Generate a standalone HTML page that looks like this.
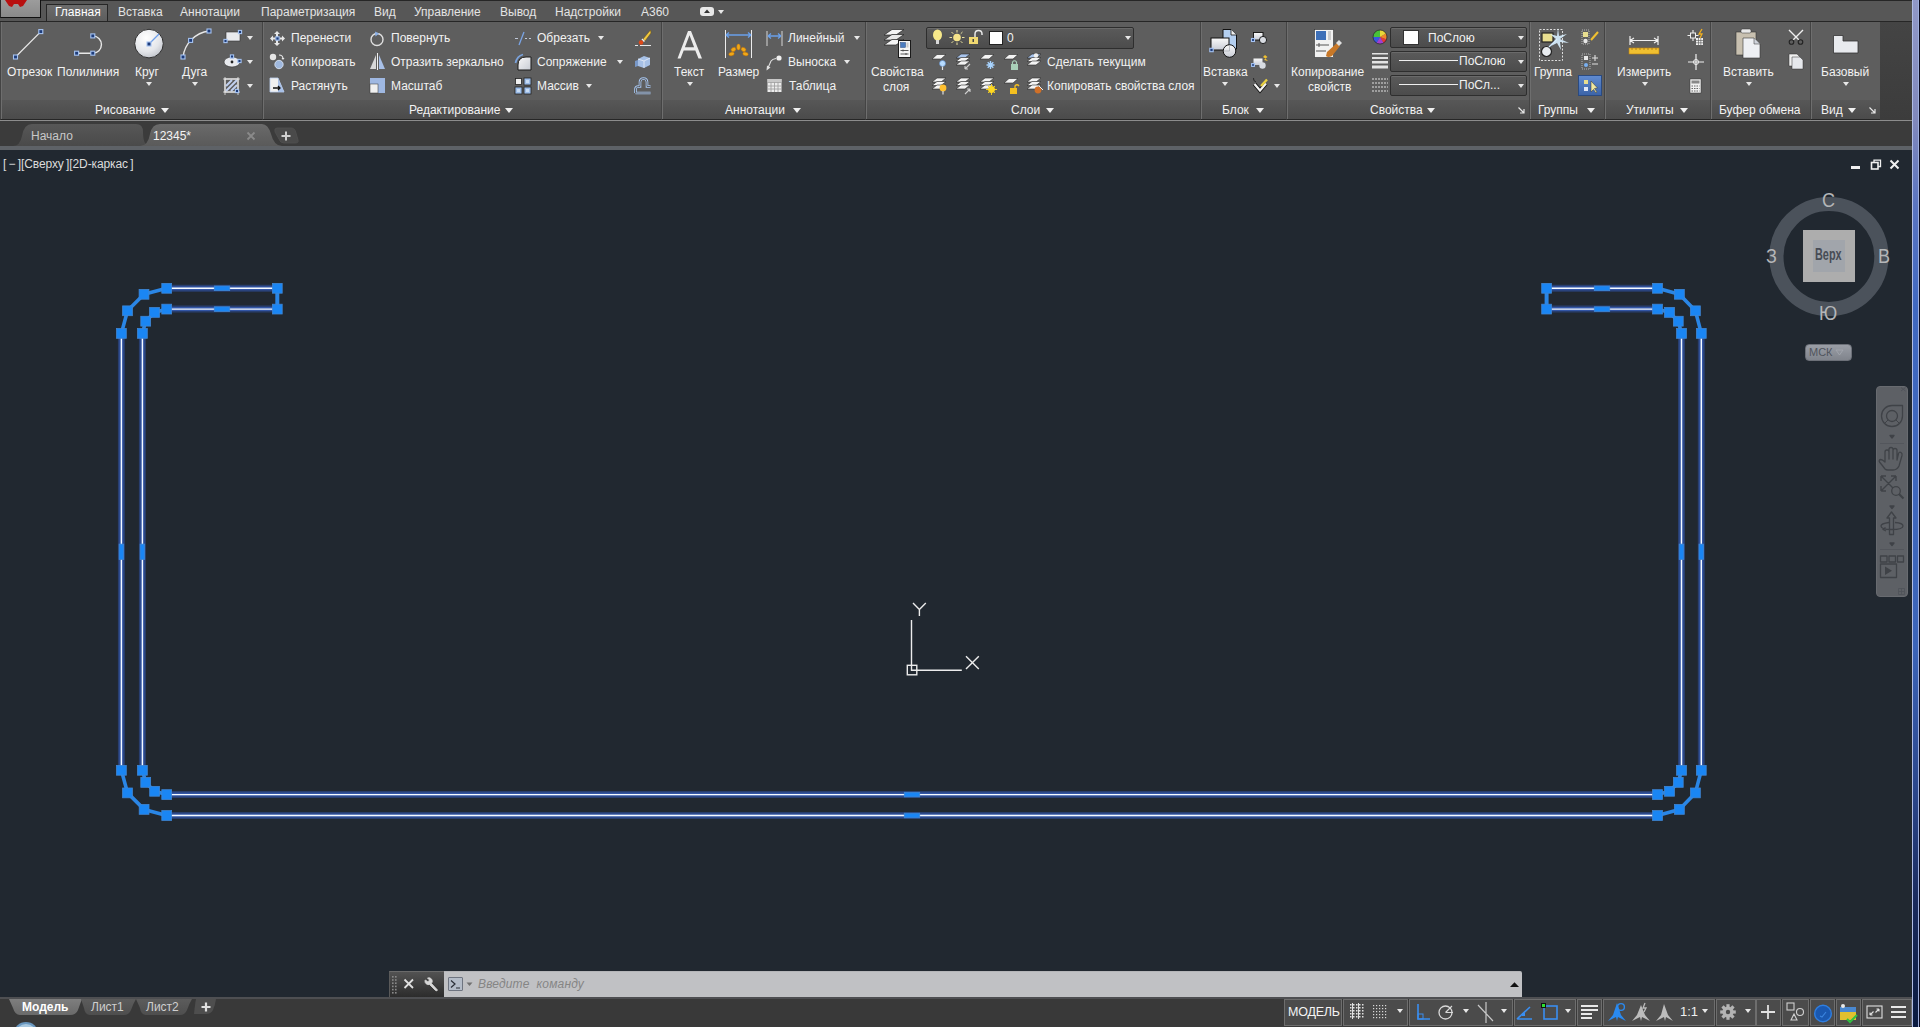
<!DOCTYPE html>
<html><head><meta charset="utf-8"><title>AutoCAD</title>
<style>
*{margin:0;padding:0;box-sizing:border-box}
html,body{width:1920px;height:1027px;overflow:hidden;background:#212830;font-family:"Liberation Sans",sans-serif;font-size:12px;color:#f0f0f0}
.a{position:absolute}
.t{position:absolute;white-space:nowrap;line-height:14px;color:#f2f2f2}
svg{position:absolute;overflow:visible}
#topbar{left:0;top:0;width:1913px;height:22px;background:#575757;border-top:1px solid #262626;border-bottom:1px solid #262626}
#ribbon{left:0;top:21px;width:1913px;height:100px;background:linear-gradient(#444,#3c3c3c);border-top:1px solid #262626;border-bottom:1px solid #8c8c8c}
.panel{position:absolute;top:0;height:98px;background:#5e5e5e;border-left:1px solid #444;border-bottom:1px solid #262626}
.panel:after{content:"";position:absolute;left:0;top:0;bottom:0;width:1px;background:#6e6e6e}
.ptitle{position:absolute;left:0;right:0;bottom:0;height:19px;background:linear-gradient(#575757,#4b4b4b)}
.arr{position:absolute;width:0;height:0;border-left:4px solid transparent;border-right:4px solid transparent;border-top:5px solid #f0f0f0}
.sarr{position:absolute;width:0;height:0;border-left:3px solid transparent;border-right:3px solid transparent;border-top:4px solid #e8e8e8}
.dd{position:absolute;background:linear-gradient(#5a5a5a,#4c4c4c);border:1px solid #2e2e2e;border-radius:2px;box-shadow:inset 0 1px 0 #6a6a6a}
#doctabs{left:0;top:121px;width:1913px;height:29px;background:#3b3b3b}
#canvas{left:0;top:150px;width:1913px;height:848px;background:#212830}
#status{left:0;top:997px;width:1913px;height:30px;background:#393939;border-top:2px solid #4e4f52}
#rborder{left:1912px;top:0;width:8px;height:1027px;background:linear-gradient(#9098c8,#8088bc 12%,#5a74c0 20%,#4068c0 30%,#3c64b8 63%,#2a4488 78%,#1a2a5c 88%,#0a1a40);border-left:1px solid #b0bce4;border-right:1px solid #0a0a20;box-shadow:inset -1px 0 0 #a0b0dc}
.sg{position:absolute;top:2px;height:26px;background:#4b4b4b;border:1px solid #6e6e6e}
</style></head>
<body>
<div id="canvas" class="a"></div>
<div id="topbar" class="a"></div>
<div class="a" style="left:0;top:0;width:41px;height:18px;background:linear-gradient(#9c9c9c,#8a8a8a);border:1px solid #111;border-top:none;border-left:1px solid #2a2a2a"></div>
<svg style="left:4px;top:0px" width="24" height="8" viewBox="0 0 24 8"><path d="M1 0 L5 6 L8 7 L10 4 L14 4 L16 7 L19 6 L23 0 Z" fill="#b81010"/></svg>
<div class="a" style="left:46px;top:4px;width:62px;height:18px;background:linear-gradient(#6c6c6c,#5c5c5c);border:1px solid #262626;border-bottom:none"></div>
<span class="t" style="left:55px;top:5px;color:#ffffff">Главная</span>
<span class="t" style="left:118px;top:5px;color:#e4e4e4">Вставка</span>
<span class="t" style="left:180px;top:5px;color:#e4e4e4">Аннотации</span>
<span class="t" style="left:261px;top:5px;color:#e4e4e4">Параметризация</span>
<span class="t" style="left:374px;top:5px;color:#e4e4e4">Вид</span>
<span class="t" style="left:414px;top:5px;color:#e4e4e4">Управление</span>
<span class="t" style="left:500px;top:5px;color:#e4e4e4">Вывод</span>
<span class="t" style="left:555px;top:5px;color:#e4e4e4">Надстройки</span>
<span class="t" style="left:641px;top:5px;color:#e4e4e4">A360</span>
<div class="a" style="left:700px;top:7px;width:14px;height:9px;background:#e8e8e8;border-radius:3px"></div>
<svg style="left:703px;top:8px" width="8" height="6" viewBox="0 0 8 6"><path d="M1 5 L4 1.5 L7 5Z" fill="#333"/></svg>
<div class="sarr" style="left:718px;top:10px"></div>
<div id="ribbon" class="a">










</div>
<div class="panel" style="left:0px;top:22px;width:262px"><div class="ptitle"></div></div>
<span class="t" style="left:95px;top:103px;">Рисование</span>
<div class="arr" style="left:160.5px;top:108px"></div>
<div class="panel" style="left:262px;top:22px;width:399px"><div class="ptitle"></div></div>
<span class="t" style="left:409px;top:103px;">Редактирование</span>
<div class="arr" style="left:505px;top:108px"></div>
<div class="panel" style="left:661px;top:22px;width:204px"><div class="ptitle"></div></div>
<span class="t" style="left:725px;top:103px;">Аннотации</span>
<div class="arr" style="left:793px;top:108px"></div>
<div class="panel" style="left:865px;top:22px;width:335px"><div class="ptitle"></div></div>
<span class="t" style="left:1011px;top:103px;">Слои</span>
<div class="arr" style="left:1046px;top:108px"></div>
<div class="panel" style="left:1200px;top:22px;width:86px"><div class="ptitle"></div></div>
<span class="t" style="left:1222px;top:103px;">Блок</span>
<div class="arr" style="left:1256px;top:108px"></div>
<div class="panel" style="left:1286px;top:22px;width:243px"><div class="ptitle"></div></div>
<span class="t" style="left:1370px;top:103px;">Свойства</span>
<div class="arr" style="left:1427px;top:108px"></div>
<svg style="left:1517px;top:106px" width="9" height="9" viewBox="0 0 9 9"><path d="M1.5 1.5 L7 7 M7 3 L7 7 L3 7" stroke="#e8e8e8" stroke-width="1.2" fill="none"/></svg>
<div class="panel" style="left:1529px;top:22px;width:75px"><div class="ptitle"></div></div>
<span class="t" style="left:1538px;top:103px;">Группы</span>
<div class="arr" style="left:1587px;top:108px"></div>
<div class="panel" style="left:1604px;top:22px;width:106px"><div class="ptitle"></div></div>
<span class="t" style="left:1626px;top:103px;">Утилиты</span>
<div class="arr" style="left:1680px;top:108px"></div>
<div class="panel" style="left:1710px;top:22px;width:100px"><div class="ptitle"></div></div>
<span class="t" style="left:1719px;top:103px;">Буфер обмена</span>
<div class="panel" style="left:1810px;top:22px;width:70px"><div class="ptitle"></div></div>
<span class="t" style="left:1821px;top:103px;">Вид</span>
<div class="arr" style="left:1848px;top:108px"></div>
<svg style="left:1868px;top:106px" width="9" height="9" viewBox="0 0 9 9"><path d="M1.5 1.5 L7 7 M7 3 L7 7 L3 7" stroke="#e8e8e8" stroke-width="1.2" fill="none"/></svg>
<svg style="left:0px;top:22px" width="60" height="50" viewBox="0 0 60 50"><line x1="15.5" y1="35" x2="40.8" y2="9.6" stroke="#e8e8e8" stroke-width="1.3"/><rect x="13.5" y="33.0" width="4" height="4" fill="#1e3c7a" stroke="#a6c4f2" stroke-width="1.1"/><rect x="38.8" y="7.6" width="4" height="4" fill="#1e3c7a" stroke="#a6c4f2" stroke-width="1.1"/></svg>
<span class="t" style="left:7px;top:65px;">Отрезок</span>
<svg style="left:60px;top:22px" width="60" height="50" viewBox="0 0 60 50"><path d="M16.6 31.2 L32.8 31.2 A8.6 8.6 0 0 0 32.8 13.9" stroke="#e8e8e8" stroke-width="1.4" fill="none"/><rect x="14.600000000000001" y="29.2" width="4" height="4" fill="#1e3c7a" stroke="#a6c4f2" stroke-width="1.1"/><rect x="30.799999999999997" y="29.2" width="4" height="4" fill="#1e3c7a" stroke="#a6c4f2" stroke-width="1.1"/><rect x="30.799999999999997" y="11.9" width="4" height="4" fill="#1e3c7a" stroke="#a6c4f2" stroke-width="1.1"/></svg>
<span class="t" style="left:57px;top:65px;">Полилиния</span>
<svg style="left:120px;top:22px" width="60" height="50" viewBox="0 0 60 50"><defs><radialGradient id="cg" cx="0.4" cy="0.3" r="0.8"><stop offset="0" stop-color="#ffffff"/><stop offset="0.6" stop-color="#e4e6ea"/><stop offset="1" stop-color="#b8bcc4"/></radialGradient></defs><circle cx="29" cy="21.6" r="14.3" fill="url(#cg)" stroke="#2e2e2e" stroke-width="1"/><line x1="29" y1="22" x2="39" y2="12" stroke="#6a9ce8" stroke-width="1.2"/><rect x="27.0" y="20.0" width="4" height="4" fill="#1e3c7a" stroke="#a6c4f2" stroke-width="1.1"/></svg>
<span class="t" style="left:135px;top:65px;">Круг</span>
<div class="sarr" style="left:145.5px;top:82px"></div>
<svg style="left:180px;top:22px" width="40" height="50" viewBox="0 0 40 50"><path d="M3 35 A30 30 0 0 1 29 9" stroke="#e8e8e8" stroke-width="1.3" fill="none"/><rect x="1.0" y="33.0" width="4" height="4" fill="#1e3c7a" stroke="#a6c4f2" stroke-width="1.1"/><rect x="8.6" y="16.4" width="4" height="4" fill="#1e3c7a" stroke="#a6c4f2" stroke-width="1.1"/><rect x="27.0" y="7.0" width="4" height="4" fill="#1e3c7a" stroke="#a6c4f2" stroke-width="1.1"/></svg>
<span class="t" style="left:182px;top:65px;">Дуга</span>
<div class="sarr" style="left:192.3px;top:82px"></div>
<svg style="left:222px;top:28px" width="22" height="18" viewBox="0 0 22 18"><rect x="4" y="4" width="14" height="9" fill="#e8eaee" stroke="#333" stroke-width="0.6"/><rect x="1.9" y="11.4" width="3.2" height="3.2" fill="#1e3c7a" stroke="#a6c4f2" stroke-width="1.1"/><rect x="16.4" y="2.4" width="3.2" height="3.2" fill="#1e3c7a" stroke="#a6c4f2" stroke-width="1.1"/></svg>
<svg style="left:222px;top:53px" width="22" height="18" viewBox="0 0 22 18"><ellipse cx="10" cy="9" rx="8" ry="5" fill="#e8eaee" stroke="#333" stroke-width="0.6"/><circle cx="10" cy="9" r="1.4" fill="#222"/><rect x="8.4" y="1.9" width="3.2" height="3.2" fill="#1e3c7a" stroke="#a6c4f2" stroke-width="1.1"/><rect x="15.9" y="6.4" width="3.2" height="3.2" fill="#1e3c7a" stroke="#a6c4f2" stroke-width="1.1"/></svg>
<svg style="left:222px;top:76px" width="22" height="20" viewBox="0 0 22 20"><rect x="3" y="3" width="13" height="13" fill="none" stroke="#e8e8e8" stroke-width="1.2"/><path d="M4 15 L15 4 M4 10 L10 4 M9 15 L15 9" stroke="#c0d0f0" stroke-width="2"/><path d="M1 3H18 M1 16H18 M3 1V19 M16 1V19" stroke="#e8e8e8" stroke-width="0.8"/><rect x="13.4" y="13.4" width="3.2" height="3.2" fill="#1e3c7a" stroke="#a6c4f2" stroke-width="1.1"/></svg>
<div class="sarr" style="left:246.6px;top:36px"></div>
<div class="sarr" style="left:246.6px;top:60px"></div>
<div class="sarr" style="left:246.6px;top:84px"></div>
<svg style="left:269px;top:30px" width="18" height="18" viewBox="0 0 18 18"><path d="M8 1 L11 4 H9 V7 H7 V4 H5Z M8 16 L11 13 H9 V10 H7 V13 H5Z M1 8.5 L4 5.5 V7.5 H6.5 V9.5 H4 V11.5Z M16 8.5 L13 5.5 V7.5 H10.5 V9.5 H13 V11.5Z" fill="#e8e8e8"/><rect x="6.8" y="6.8" width="3.4" height="3.4" fill="#1e3c7a" stroke="#a6c4f2" stroke-width="1.1"/></svg>
<span class="t" style="left:291px;top:31px;">Перенести</span>
<svg style="left:269px;top:53px" width="18" height="18" viewBox="0 0 18 18"><circle cx="4" cy="4" r="3.2" fill="#e6e6e6"/><circle cx="10" cy="11.5" r="4.2" fill="#9fb8de" stroke="#dfe8f6" stroke-width="0.8"/><path d="M10 2 Q14 2 14 6" stroke="#e8e8e8" fill="none" stroke-width="1.1"/><path d="M12.5 5 L14 7 L15.5 5Z" fill="#e8e8e8"/></svg>
<span class="t" style="left:291px;top:55px;">Копировать</span>
<svg style="left:269px;top:77px" width="18" height="18" viewBox="0 0 18 18"><path d="M1 1 H9 L15 15 H1Z" fill="#f0f0f0" stroke="#bcd0f0" stroke-width="0.8"/><path d="M9 1 L15 15 H9Z" fill="#a8c0e8"/><path d="M4 11 H11 M9 9 L11 11 L9 13" stroke="#111" stroke-width="1.3" fill="none"/></svg>
<span class="t" style="left:291px;top:79px;">Растянуть</span>
<svg style="left:369px;top:30px" width="18" height="18" viewBox="0 0 18 18"><circle cx="8" cy="9.5" r="6" fill="none" stroke="#e0e0e0" stroke-width="1.4"/><path d="M6 1.5 L10 3.5 L6.5 6.5Z" fill="#8ab0e8"/></svg>
<span class="t" style="left:391px;top:31px;">Повернуть</span>
<svg style="left:369px;top:53px" width="18" height="18" viewBox="0 0 18 18"><path d="M7 2 V16 H1Z" fill="#d8d8d8"/><path d="M10 2 V16 H16Z" fill="#a8c0e8"/><line x1="8.5" y1="0" x2="8.5" y2="17" stroke="#f0f0f0" stroke-width="1"/></svg>
<span class="t" style="left:391px;top:55px;">Отразить зеркально</span>
<svg style="left:369px;top:77px" width="18" height="18" viewBox="0 0 18 18"><rect x="1" y="1" width="15" height="15" fill="#9fb8e2"/><rect x="1" y="7" width="8" height="9" fill="#f0f0f0" stroke="#333" stroke-width="0.5"/></svg>
<span class="t" style="left:391px;top:79px;">Масштаб</span>
<svg style="left:514px;top:30px" width="18" height="18" viewBox="0 0 18 18"><path d="M1 8.5 H4 M11 8.5 H13 M15 8.5 H17" stroke="#c0c8d8" stroke-width="1.1"/><line x1="5" y1="15" x2="10" y2="2" stroke="#7aa4e4" stroke-width="1.3"/></svg>
<span class="t" style="left:537px;top:31px;">Обрезать</span>
<div class="sarr" style="left:597.6px;top:36px"></div>
<svg style="left:514px;top:53px" width="18" height="18" viewBox="0 0 18 18"><defs><linearGradient id="fg" x1="0" y1="0" x2="1" y2="1"><stop offset="0" stop-color="#f8f8f8"/><stop offset="1" stop-color="#c8ccd4"/></linearGradient></defs><path d="M4 17 V12 Q4 4 12 4 H17 V17Z" fill="url(#fg)" stroke="#1a1a1a" stroke-width="1"/><path d="M1.5 10 Q3 3 9 1.5" stroke="#7aa2dc" stroke-width="1.8" fill="none"/></svg>
<span class="t" style="left:537px;top:55px;">Сопряжение</span>
<div class="sarr" style="left:616.5px;top:60px"></div>
<svg style="left:514px;top:77px" width="18" height="18" viewBox="0 0 18 18"><g stroke="#222" stroke-width="0.8"><rect x="1.5" y="1.5" width="6" height="6" fill="#f0f0f0"/><rect x="10" y="1" width="7" height="7" fill="#9cbce8"/><rect x="1" y="10" width="7" height="7" fill="#9cbce8"/><rect x="10" y="10" width="7" height="7" fill="#9cbce8"/></g><g fill="#c8dcf4"><rect x="12" y="3" width="3" height="3"/><rect x="3" y="12" width="3" height="3"/><rect x="12" y="12" width="3" height="3"/></g></svg>
<span class="t" style="left:537px;top:79px;">Массив</span>
<div class="sarr" style="left:585.6px;top:84px"></div>
<svg style="left:634px;top:29px" width="18" height="18" viewBox="0 0 18 18"><path d="M16.5 1 L9 10 L11 12 L17 4Z" fill="#f0c840" stroke="#6a5010" stroke-width="0.5"/><path d="M8 10 L10.5 12.5" stroke="#f0f0f0" stroke-width="1.5"/><circle cx="7" cy="13.5" r="2.3" fill="#e04818"/><path d="M1 16.5 H4 M6 16.5 H17" stroke="#e8e8e8" stroke-width="1"/></svg>
<svg style="left:634px;top:53px" width="18" height="18" viewBox="0 0 18 18"><path d="M4 6 L10 3 L16 5 V12 L10 15 L4 13Z" fill="#a6c0e6"/><path d="M4 6 L10 8 L16 5 M10 8 V15" stroke="#e8eef8" stroke-width="0.8" fill="none"/><path d="M1 8 L4 7 V13 L1 14Z" fill="#7898c8"/></svg>
<svg style="left:634px;top:77px" width="18" height="18" viewBox="0 0 18 18"><path d="M1.5 16 V12 Q1.5 9.5 4.5 9.5 H6 V5 Q6 1.5 9.5 1.5 Q13 1.5 13 5 V9.5 H16.5 M1.5 16 H16.5" fill="none" stroke="#a8c8f4" stroke-width="2.6"/><path d="M1.5 16 V12 Q1.5 9.5 4.5 9.5 H6 V5 Q6 1.5 9.5 1.5 Q13 1.5 13 5 V9.5 H16.5 M1.5 16 H16.5" fill="none" stroke="#5e5e5e" stroke-width="1"/></svg>
<svg style="left:676px;top:29px" width="30" height="32" viewBox="0 0 30 32"><path d="M1.5 29.5 L12 2 H15 L26 29.5 H22.5 L19.3 21.5 H7.7 L4.6 29.5Z M8.9 18.3 H18.1 L13.5 6.3Z" fill="#ececec"/></svg>
<span class="t" style="left:674px;top:65px;">Текст</span>
<div class="sarr" style="left:687px;top:82px"></div>
<svg style="left:723px;top:28px" width="32" height="32" viewBox="0 0 32 32"><line x1="2.5" y1="2" x2="2.5" y2="30" stroke="#ececec" stroke-width="1"/><line x1="28.5" y1="2" x2="28.5" y2="30" stroke="#ececec" stroke-width="1"/><path d="M3 7 H28 M3 7 L6 4.5 M3 7 L6 9.5 M28 7 L25 4.5 M28 7 L25 9.5" stroke="#6aa0ea" stroke-width="1.4" fill="none"/><g fill="#f0a818" stroke="#b86c08" stroke-width="0.5"><ellipse cx="15.5" cy="19" rx="1.8" ry="3"/><ellipse cx="10.5" cy="21.5" rx="2.6" ry="2" transform="rotate(-35 10.5 21.5)"/><ellipse cx="20.5" cy="21.5" rx="2.6" ry="2" transform="rotate(35 20.5 21.5)"/><ellipse cx="8.5" cy="26" rx="2.8" ry="1.8" transform="rotate(-10 8.5 26)"/><ellipse cx="22.5" cy="26" rx="2.8" ry="1.8" transform="rotate(10 22.5 26)"/></g></svg>
<span class="t" style="left:718px;top:65px;">Размер</span>
<svg style="left:766px;top:29px" width="18" height="18" viewBox="0 0 18 18"><line x1="1" y1="2" x2="1" y2="17" stroke="#e4e4e4" stroke-width="0.9"/><line x1="16" y1="2" x2="16" y2="17" stroke="#e4e4e4" stroke-width="0.9"/><path d="M2 7 H15 M2 7 L5 4.5 M2 7 L5 9.5 M15 7 L12 4.5 M15 7 L12 9.5" stroke="#6aa0ea" stroke-width="1.3" fill="none"/></svg>
<span class="t" style="left:788px;top:31px;">Линейный</span>
<div class="sarr" style="left:854px;top:36px"></div>
<svg style="left:766px;top:54px" width="18" height="18" viewBox="0 0 18 18"><path d="M1.5 15 L5 7 Q6.5 5 10 4.5" stroke="#e0e0e0" stroke-width="1.1" fill="none"/><circle cx="13" cy="4" r="2.6" fill="#f0f0f0"/><path d="M0.5 16.5 L1 11.5 L4.5 13.5Z" fill="#e0e0e0"/></svg>
<span class="t" style="left:788px;top:55px;">Выноска</span>
<div class="sarr" style="left:844px;top:60px"></div>
<svg style="left:766px;top:77px" width="18" height="18" viewBox="0 0 18 18"><rect x="1.5" y="2" width="14" height="13" fill="#ececec"/><path d="M1.5 5.5 H15.5 M1.5 9 H15.5 M1.5 12 H15.5 M5 5.5 V15 M8.5 5.5 V15 M12 5.5 V15" stroke="#9a9a9a" stroke-width="0.8"/><rect x="1.5" y="2" width="14" height="3" fill="#c8c8c8"/></svg>
<span class="t" style="left:789px;top:79px;">Таблица</span>
<svg style="left:883px;top:28px" width="30" height="32" viewBox="0 0 30 32"><path d="M1 7 L9 1.5 H21 L13 7Z" fill="#f4f4f4" stroke="#222" stroke-width="0.7"/><path d="M1 12 L9 6.5 H21 L13 12Z" fill="#e8e8e8" stroke="#222" stroke-width="0.7"/><path d="M1 17 L9 11.5 H21 L13 17Z" fill="#f4f4f4" stroke="#222" stroke-width="0.7"/><rect x="15.5" y="12.5" width="12" height="17" fill="#f4f4f4" stroke="#1a1a1a" stroke-width="1"/><rect x="17.5" y="14.5" width="5" height="5" fill="#4a7cc0" stroke="#2a4a80" stroke-width="0.5"/><rect x="23.5" y="14.5" width="2" height="5" fill="#c8c8c8"/><path d="M17.5 22.5 H25.5 M17.5 26 H25.5" stroke="#444" stroke-width="0.9"/><path d="M20 21.5 V23.5 M23 25 V27" stroke="#444" stroke-width="0.9"/></svg>
<span class="t" style="left:871px;top:65px;">Свойства</span>
<span class="t" style="left:883px;top:80px;">слоя</span>
<div class="dd" style="left:926px;top:27px;width:208px;height:22px"></div>
<svg style="left:931px;top:29px" width="14" height="18" viewBox="0 0 14 18"><ellipse cx="6.5" cy="6" rx="4.5" ry="5.5" fill="#f6e88a"/><rect x="5" y="11" width="3" height="4" fill="#d8d8d8"/></svg>
<svg style="left:949px;top:29px" width="16" height="18" viewBox="0 0 16 18"><circle cx="8" cy="8.5" r="3.8" fill="#f6e48a"/><path d="M8 1 V3.5 M8 13.5 V16 M0.5 8.5 H3 M13 8.5 H15.5 M2.5 3 L4.3 4.8 M11.7 12.2 L13.5 14 M2.5 14 L4.3 12.2 M11.7 4.8 L13.5 3" stroke="#e8e0a0" stroke-width="1"/></svg>
<svg style="left:968px;top:29px" width="18" height="18" viewBox="0 0 18 18"><rect x="1" y="8" width="9" height="7" fill="#f0d870"/><path d="M7 8 V5 Q7 1.5 10.5 1.5 Q14 1.5 14 5 V6" stroke="#e8e8e8" stroke-width="1.5" fill="none"/><rect x="4.5" y="10" width="1.5" height="3" fill="#444"/></svg>
<div class="a" style="left:989px;top:31px;width:14px;height:14px;background:#fff;border:1px solid #222"></div>
<span class="t" style="left:1007px;top:31px;">0</span>
<div class="sarr" style="left:1125px;top:36px"></div>
<svg style="left:931px;top:53px" width="18" height="18" viewBox="0 0 18 18"><path d="M1 6 L6 1.5 H15 L10 6Z" fill="#f4f4f4" stroke="#2a2a2a" stroke-width="0.6"/><circle cx="11.5" cy="10.5" r="3" fill="#b8dcff" stroke="#5a8ac8" stroke-width="0.6"/><path d="M11.5 13.5 V17" stroke="#e0e0e0" stroke-width="1.2"/></svg>
<svg style="left:931px;top:77px" width="18" height="18" viewBox="0 0 18 18"><path d="M1 5.0 L6 1.0 H15 L10 5.0Z" fill="#f4f4f4" stroke="#2a2a2a" stroke-width="0.6"/><path d="M1 8.5 L6 4.5 H15 L10 8.5Z" fill="#f4f4f4" stroke="#2a2a2a" stroke-width="0.6"/><path d="M1 12.0 L6 8.0 H15 L10 12.0Z" fill="#f4f4f4" stroke="#2a2a2a" stroke-width="0.6"/><circle cx="12" cy="11" r="3.4" fill="#ffc030"/><path d="M12 14 V17.5" stroke="#e0e0e0" stroke-width="1.2"/></svg>
<svg style="left:955px;top:53px" width="18" height="18" viewBox="0 0 18 18"><path d="M1 5.0 L6 1.0 H15 L10 5.0Z" fill="#a8c4ec" stroke="#2a2a2a" stroke-width="0.6"/><path d="M1 8.5 L6 4.5 H15 L10 8.5Z" fill="#f4f4f4" stroke="#2a2a2a" stroke-width="0.6"/><path d="M1 12.0 L6 8.0 H15 L10 12.0Z" fill="#f4f4f4" stroke="#2a2a2a" stroke-width="0.6"/><path d="M10 16 L15 11 M10 16 V13 M10 16 H13" stroke="#d0d0d0" stroke-width="1.1" fill="none"/></svg>
<svg style="left:955px;top:77px" width="18" height="18" viewBox="0 0 18 18"><path d="M1 5.0 L6 1.0 H15 L10 5.0Z" fill="#f4f4f4" stroke="#2a2a2a" stroke-width="0.6"/><path d="M1 8.5 L6 4.5 H15 L10 8.5Z" fill="#f4f4f4" stroke="#2a2a2a" stroke-width="0.6"/><path d="M1 12.0 L6 8.0 H15 L10 12.0Z" fill="#f4f4f4" stroke="#2a2a2a" stroke-width="0.6"/><path d="M10 17 L15 12 M15 12 V15 M15 12 H12" stroke="#d0d0d0" stroke-width="1.1" fill="none"/></svg>
<svg style="left:979px;top:53px" width="18" height="18" viewBox="0 0 18 18"><path d="M1 6 L6 1.5 H15 L10 6Z" fill="#f4f4f4" stroke="#2a2a2a" stroke-width="0.6"/><path d="M11.5 8 V16 M7.5 12 H15.5 M8.7 9.2 L14.3 14.8 M14.3 9.2 L8.7 14.8" stroke="#a8d4ff" stroke-width="1.4"/></svg>
<svg style="left:979px;top:77px" width="18" height="18" viewBox="0 0 18 18"><path d="M1 5.0 L6 1.0 H15 L10 5.0Z" fill="#f4f4f4" stroke="#2a2a2a" stroke-width="0.6"/><path d="M1 8.5 L6 4.5 H15 L10 8.5Z" fill="#f4f4f4" stroke="#2a2a2a" stroke-width="0.6"/><path d="M1 12.0 L6 8.0 H15 L10 12.0Z" fill="#f4f4f4" stroke="#2a2a2a" stroke-width="0.6"/><circle cx="12.5" cy="12.5" r="3.4" fill="#ffd820"/><path d="M12.5 7 V18 M7 12.5 H18 M9 9 L16 16 M16 9 L9 16" stroke="#ffd820" stroke-width="0.9"/></svg>
<svg style="left:1003px;top:53px" width="18" height="18" viewBox="0 0 18 18"><path d="M1 6 L6 1.5 H15 L10 6Z" fill="#f4f4f4" stroke="#2a2a2a" stroke-width="0.6"/><rect x="8" y="11" width="7" height="6" fill="#a8d0b8"/><path d="M9.5 11 V9 Q11.5 6.5 13.5 9 V11" stroke="#a8d0b8" fill="none" stroke-width="1.2"/></svg>
<svg style="left:1003px;top:77px" width="18" height="18" viewBox="0 0 18 18"><path d="M1 6 L6 1.5 H15 L10 6Z" fill="#f4f4f4" stroke="#2a2a2a" stroke-width="0.6"/><rect x="7" y="11" width="7" height="6" fill="#f4c020"/><path d="M12 11 V9 Q14 6.5 16 9" stroke="#f4c020" fill="none" stroke-width="1.3"/></svg>
<svg style="left:1026px;top:53px" width="18" height="18" viewBox="0 0 18 18"><path d="M1 5.0 L6 1.0 H15 L10 5.0Z" fill="#a8c4ec" stroke="#2a2a2a" stroke-width="0.6"/><path d="M1 8.5 L6 4.5 H15 L10 8.5Z" fill="#f4f4f4" stroke="#2a2a2a" stroke-width="0.6"/><path d="M1 12.0 L6 8.0 H15 L10 12.0Z" fill="#f4f4f4" stroke="#2a2a2a" stroke-width="0.6"/><circle cx="10" cy="2.5" r="2.2" fill="#f0f0f0"/></svg>
<svg style="left:1026px;top:77px" width="18" height="18" viewBox="0 0 18 18"><path d="M1 5.0 L6 1.0 H15 L10 5.0Z" fill="#f4f4f4" stroke="#2a2a2a" stroke-width="0.6"/><path d="M1 8.5 L6 4.5 H15 L10 8.5Z" fill="#f4f4f4" stroke="#2a2a2a" stroke-width="0.6"/><path d="M1 12.0 L6 8.0 H15 L10 12.0Z" fill="#f4f4f4" stroke="#2a2a2a" stroke-width="0.6"/><circle cx="12" cy="13" r="3.4" fill="#d07028"/><path d="M13 9 L17 13" stroke="#f0f0f0" stroke-width="1"/></svg>
<span class="t" style="left:1047px;top:55px;">Сделать текущим</span>
<span class="t" style="left:1047px;top:79px;">Копировать свойства слоя</span>
<svg style="left:1207px;top:28px" width="36" height="32" viewBox="0 0 36 32"><defs><linearGradient id="bg1" x1="0" y1="0" x2="0" y2="1"><stop offset="0" stop-color="#fafafa"/><stop offset="1" stop-color="#c8ccd6"/></linearGradient></defs><path d="M16 1.5 H24 L29.5 7 V21 H16Z" fill="#b4cff0" stroke="#111" stroke-width="1"/><path d="M24 1.5 V7 H29.5" fill="#f0f0f0" stroke="#111" stroke-width="0.8"/><rect x="4" y="10" width="18" height="12" fill="url(#bg1)" stroke="#111" stroke-width="1"/><circle cx="22.5" cy="23" r="6.3" fill="url(#bg1)" stroke="#111" stroke-width="1"/><path d="M22.5 17 V23 H16.5" stroke="#9aa0aa" stroke-width="0.6" fill="none"/><rect x="2.8" y="20.3" width="3.4" height="3.4" fill="#1e3c7a" stroke="#a6c4f2" stroke-width="1.1"/></svg>
<span class="t" style="left:1203px;top:65px;">Вставка</span>
<div class="sarr" style="left:1221.5px;top:82px"></div>
<svg style="left:1250px;top:30px" width="20" height="16" viewBox="0 0 20 16"><rect x="3.5" y="2.5" width="9.5" height="7.5" fill="url(#bg1)" stroke="#111" stroke-width="0.9"/><circle cx="13" cy="10" r="3.6" fill="#d8dce2" stroke="#111" stroke-width="0.9"/><rect x="1.5" y="8.5" width="3" height="3" fill="#1e3c7a" stroke="#a6c4f2" stroke-width="1.1"/></svg>
<svg style="left:1250px;top:54px" width="20" height="16" viewBox="0 0 20 16"><rect x="3.5" y="4.5" width="9" height="6.5" fill="url(#bg1)"/><circle cx="12.5" cy="11.5" r="3.2" fill="#d8dce2"/><path d="M15 1 L17.5 3 L15.5 4.5 L18 7 L14 6 L15.5 4.5 L13 3Z" fill="#f0c030"/><rect x="1.6" y="9.6" width="2.8" height="2.8" fill="#1e3c7a" stroke="#a6c4f2" stroke-width="1.1"/></svg>
<svg style="left:1252px;top:77px" width="18" height="18" viewBox="0 0 18 18"><path d="M2.5 7 L8 13.5 L14 6.5" stroke="#111" stroke-width="4" fill="none"/><path d="M2.5 7 L8 13.5 L14 6.5" stroke="#f4f4f4" stroke-width="2.2" fill="none"/><path d="M9 9 L15 2.5" stroke="#e8d040" stroke-width="2.4"/><path d="M1.5 1 Q1 4 4 5" stroke="#222" stroke-width="0.9" fill="none"/></svg>
<div class="sarr" style="left:1274px;top:84px"></div>
<svg style="left:1313px;top:28px" width="34" height="34" viewBox="0 0 34 34"><rect x="1.5" y="1.5" width="19" height="28" fill="#f2f2f2" stroke="#333" stroke-width="0.6"/><rect x="3" y="3" width="10" height="9" fill="#3e70b8"/><rect x="15" y="3" width="3" height="9" fill="#ccc"/><path d="M3 17 H16 M3 23 H13 M6 15 V19" stroke="#555" stroke-width="1"/><path d="M14 24 L24 15 L27 18 L19 28 Q15 30 13 28Z" fill="#c87828"/><path d="M23 15 L26 12 L29 15 L26 18Z" fill="#e0e0e0"/></svg>
<span class="t" style="left:1291px;top:65px;">Копирование</span>
<span class="t" style="left:1308px;top:80px;">свойств</span>
<svg style="left:1372px;top:29px" width="17" height="17" viewBox="0 0 17 17"><path d="M8 8 L8.00 1.00 A7 7 0 0 1 14.06 4.50Z" fill="#e8d838"/><path d="M8 8 L14.06 4.50 A7 7 0 0 1 14.58 10.39Z" fill="#f08828"/><path d="M8 8 L14.58 10.39 A7 7 0 0 1 11.50 14.06Z" fill="#e83838"/><path d="M8 8 L11.50 14.06 A7 7 0 0 1 4.50 14.06Z" fill="#a040d0"/><path d="M8 8 L4.50 14.06 A7 7 0 0 1 1.00 8.00Z" fill="#3858e0"/><path d="M8 8 L1.00 8.00 A7 7 0 0 1 8.00 1.00Z" fill="#48c038"/><circle cx="8" cy="8" r="7" fill="none" stroke="#222" stroke-width="0.7"/></svg>
<svg style="left:1371px;top:52px" width="18" height="18" viewBox="0 0 18 18"><rect x="1" y="1" width="16" height="1.5" fill="#e4e4e4"/><rect x="1" y="5" width="16" height="2" fill="#e4e4e4"/><rect x="1" y="9" width="16" height="2.5" fill="#e4e4e4"/><rect x="1" y="13.5" width="16" height="3" fill="#e4e4e4"/></svg>
<svg style="left:1371px;top:77px" width="18" height="18" viewBox="0 0 18 18"><path d="M1 2 H17 M1 6 H17 M1 10 H17 M1 14 H17" stroke="#e0e0e0" stroke-width="1.2" stroke-dasharray="2 1"/></svg>
<div class="dd" style="left:1390px;top:27px;width:137px;height:21px"></div>
<div class="sarr" style="left:1517.6px;top:36px"></div>
<div class="dd" style="left:1390px;top:51px;width:137px;height:21px"></div>
<div class="sarr" style="left:1517.6px;top:60px"></div>
<div class="dd" style="left:1390px;top:75px;width:137px;height:21px"></div>
<div class="sarr" style="left:1517.6px;top:84px"></div>
<div class="a" style="left:1403px;top:30px;width:16px;height:15px;background:#fff;border:1px solid #333"></div>
<span class="t" style="left:1428px;top:31px;">ПоСлою</span>
<div class="a" style="left:1399px;top:60px;width:59px;height:1px;background:#f0f0f0"></div>
<div class="a" style="left:1459px;top:54px;width:46px;height:15px;overflow:hidden"><span class="t" style="left:0;top:0">ПоСлою</span></div>
<div class="a" style="left:1399px;top:84px;width:59px;height:1px;background:#f0f0f0"></div>
<span class="t" style="left:1459px;top:78px;">ПоСл...</span>
<svg style="left:1537px;top:28px" width="36" height="34" viewBox="0 0 36 34"><rect x="2.5" y="1.5" width="23" height="31" fill="none" stroke="#ddd" stroke-width="1" stroke-dasharray="2 1.5"/><rect x="5" y="5" width="11" height="9" fill="#e8de90" stroke="#222" stroke-width="1.2"/><circle cx="9.5" cy="23.5" r="5" fill="#e8ecf0" stroke="#222" stroke-width="1.2"/><path d="M12 19 L20 11" stroke="#cfe8ff" stroke-width="1.2"/><path d="M21 0 L22 8 L30 6 L23 11 L32 15 L23 14 L24 22 L20 15 L14 18 L19 11 L13 6 L20 8Z" fill="#d8f0ff" opacity="0.9"/></svg>
<span class="t" style="left:1534px;top:65px;">Группа</span>
<svg style="left:1581px;top:29px" width="20" height="18" viewBox="0 0 20 18"><rect x="1" y="1" width="7" height="14" fill="none" stroke="#ccc" stroke-dasharray="1 1" stroke-width="0.8"/><rect x="2" y="3" width="5" height="5" fill="#e8de90"/><circle cx="4.5" cy="12" r="2.2" fill="#e8e8e8"/><path d="M10 11 L17 3" stroke="#f0c030" stroke-width="2"/></svg>
<svg style="left:1581px;top:53px" width="20" height="18" viewBox="0 0 20 18"><rect x="1" y="1" width="8" height="15" fill="none" stroke="#ccc" stroke-dasharray="1 1" stroke-width="0.8"/><rect x="3" y="3" width="4" height="4" fill="#e8e8e8"/><circle cx="5" cy="12" r="2" fill="#7ab0f0"/><path d="M11 5 H17 M14 2 V8 M11 11 H17" stroke="#e0e0e0" stroke-width="1.1"/></svg>
<div class="a" style="left:1578px;top:75px;width:24px;height:21px;background:linear-gradient(#5f8ad0,#3c64a8);border:1px solid #2a4a80"></div>
<svg style="left:1582px;top:78px" width="18" height="16" viewBox="0 0 18 16"><rect x="2" y="2" width="4" height="4" fill="#e8de90"/><rect x="2" y="9" width="4" height="4" fill="#e0e8f8"/><path d="M9 3 L9 14 L11.5 11.5 L14 15 L15 14 L12.5 10.5 L15.5 10Z" fill="#f0e8a0" stroke="#333" stroke-width="0.5"/></svg>
<svg style="left:1628px;top:35px" width="34" height="22" viewBox="0 0 34 22"><path d="M2 1 V10 M30 1 V10 M2 5.5 H30 M2 5.5 L6 3 M2 5.5 L6 8 M30 5.5 L26 3 M30 5.5 L26 8" stroke="#f0f0f0" stroke-width="1.2" fill="none"/><rect x="1" y="13" width="30" height="6" fill="#f0c030" stroke="#c08010" stroke-width="0.6"/><path d="M4 13 V15 M8 13 V15 M12 13 V15 M16 13 V15 M20 13 V15 M24 13 V15 M28 13 V15" stroke="#906010" stroke-width="0.6"/></svg>
<span class="t" style="left:1617px;top:65px;">Измерить</span>
<div class="sarr" style="left:1642px;top:82px"></div>
<svg style="left:1687px;top:29px" width="20" height="18" viewBox="0 0 20 18"><path d="M6 1 V12 M0.5 6.5 H11.5" stroke="#f0f0f0" stroke-width="1.1"/><rect x="3.5" y="4" width="5" height="5" fill="#5b5b5b" stroke="#f0f0f0"/><rect x="9" y="9" width="7" height="7" fill="#f0f0f0"/><path d="M9 11.5 H16 M9 13.8 H16 M11.5 9 V16 M13.8 9 V16" stroke="#555" stroke-width="0.6"/><path d="M15 0 L12 5 H15 L13 9" stroke="#f0b020" stroke-width="1.3" fill="none"/></svg>
<svg style="left:1687px;top:53px" width="18" height="18" viewBox="0 0 18 18"><path d="M9 1 V17 M1 9 H17" stroke="#f0f0f0" stroke-width="1.2"/><circle cx="9" cy="9" r="2.5" fill="none" stroke="#f0f0f0"/></svg>
<svg style="left:1689px;top:78px" width="14" height="16" viewBox="0 0 14 16"><rect x="1" y="1" width="11" height="14" fill="#f0f0f0" stroke="#333" stroke-width="0.5"/><rect x="2.5" y="2.5" width="8" height="3" fill="#888"/><path d="M2.5 8 H10.5 M2.5 10.5 H10.5 M2.5 13 H10.5" stroke="#555" stroke-width="0.9" stroke-dasharray="1.5 1"/></svg>
<svg style="left:1735px;top:28px" width="28" height="32" viewBox="0 0 28 32"><rect x="1" y="4" width="20" height="23" fill="#c8c0b0" stroke="#333" stroke-width="0.6"/><rect x="6" y="1" width="10" height="4" rx="1.5" fill="#e8e8e8" stroke="#333" stroke-width="0.5"/><path d="M8 10 H19 L25 16 V30 H8Z" fill="#eef0f4" stroke="#333" stroke-width="0.6"/><path d="M19 10 V16 H25" fill="#d0d4dc" stroke="#333" stroke-width="0.5"/></svg>
<span class="t" style="left:1723px;top:65px;">Вставить</span>
<div class="sarr" style="left:1745.5px;top:82px"></div>
<svg style="left:1788px;top:29px" width="17" height="17" viewBox="0 0 17 17"><path d="M1 1 L11 11 M15 1 L5 11" stroke="#f0f0f0" stroke-width="1.4"/><circle cx="3.5" cy="13" r="2.3" fill="none" stroke="#222" stroke-width="1.1"/><circle cx="12.5" cy="13" r="2.3" fill="none" stroke="#222" stroke-width="1.1"/></svg>
<svg style="left:1788px;top:53px" width="17" height="18" viewBox="0 0 17 18"><path d="M1 1 H9 L12 4 V13 H1Z" fill="#f0f0f0" stroke="#333" stroke-width="0.5"/><path d="M4 4 H12 L15 7 V16 H4Z" fill="#e6e8ec" stroke="#333" stroke-width="0.5"/></svg>
<svg style="left:1832px;top:34px" width="28" height="21" viewBox="0 0 28 21"><path d="M1.5 1.5 H11 V7 H26 V19 H1.5Z" fill="#e8eaee" stroke="#333" stroke-width="0.8"/></svg>
<span class="t" style="left:1821px;top:65px;">Базовый</span>
<div class="sarr" style="left:1842.5px;top:82px"></div>
<div id="doctabs" class="a"></div>
<svg style="left:0px;top:120px" width="1913" height="30" viewBox="0 0 1913 30"><defs><linearGradient id="tg1" x1="0" y1="0" x2="0" y2="1"><stop offset="0" stop-color="#575757"/><stop offset="1" stop-color="#4a4a4a"/></linearGradient><linearGradient id="tg2" x1="0" y1="0" x2="0" y2="1"><stop offset="0" stop-color="#6a6a6a"/><stop offset="1" stop-color="#5a5a5a"/></linearGradient></defs><path d="M13 26 Q20 26 22 16 Q24 4 32 4 H136 Q143 4 143 12 Q143 26 150 26Z" fill="url(#tg1)"/><path d="M140 26 Q148 26 150 14 Q152 4 160 4 H262 Q268 4 271 14 Q274 26 282 26Z" fill="url(#tg2)"/><path d="M277 8 H291 Q295 8 296 13 L298 20 Q299 23 295 23 H284 Q280 23 279 19 L275 12 Q274 8 277 8Z" fill="#4a4a4a" stroke="#505050" stroke-width="0.8"/><rect x="0" y="26" width="1913" height="4" fill="#5e6267"/></svg>
<span class="t" style="left:31px;top:129px;color:#c8c8c8">Начало</span>
<span class="t" style="left:153px;top:129px;color:#f4f4f4">12345*</span>
<svg style="left:246px;top:131px" width="10" height="10" viewBox="0 0 10 10"><path d="M1.5 1.5 L8.5 8.5 M8.5 1.5 L1.5 8.5" stroke="#8a8a8a" stroke-width="1.8"/></svg>
<svg style="left:280px;top:130px" width="12" height="12" viewBox="0 0 12 12"><path d="M6 1.5 V10.5 M1.5 6 H10.5" stroke="#d0d0d0" stroke-width="2"/></svg>
<svg style="left:0;top:0" width="1920" height="1027" viewBox="0 0 1920 1027"><g stroke-linecap="butt"><line x1="166.7" y1="288.3" x2="277.3" y2="288.3" stroke="#283e6e" stroke-width="7"/><line x1="166.7" y1="309.1" x2="277.3" y2="309.1" stroke="#283e6e" stroke-width="7"/><line x1="1546.6" y1="288.3" x2="1657.5" y2="288.3" stroke="#283e6e" stroke-width="7"/><line x1="1546.6" y1="309.1" x2="1657.5" y2="309.1" stroke="#283e6e" stroke-width="7"/><line x1="121.4" y1="333.4" x2="121.4" y2="770.3" stroke="#283e6e" stroke-width="7"/><line x1="142.4" y1="333.4" x2="142.4" y2="770.3" stroke="#283e6e" stroke-width="7"/><line x1="1701.3" y1="333.4" x2="1701.3" y2="770.3" stroke="#283e6e" stroke-width="7"/><line x1="1681.5" y1="333.4" x2="1681.5" y2="770.3" stroke="#283e6e" stroke-width="7"/><line x1="166.7" y1="794.6" x2="1657.5" y2="794.6" stroke="#283e6e" stroke-width="7"/><line x1="166.7" y1="815.5" x2="1657.5" y2="815.5" stroke="#283e6e" stroke-width="7"/><line x1="166.7" y1="288.3" x2="277.3" y2="288.3" stroke="#3356a6" stroke-width="4"/><line x1="166.7" y1="309.1" x2="277.3" y2="309.1" stroke="#3356a6" stroke-width="4"/><line x1="1546.6" y1="288.3" x2="1657.5" y2="288.3" stroke="#3356a6" stroke-width="4"/><line x1="1546.6" y1="309.1" x2="1657.5" y2="309.1" stroke="#3356a6" stroke-width="4"/><line x1="121.4" y1="333.4" x2="121.4" y2="770.3" stroke="#3356a6" stroke-width="4"/><line x1="142.4" y1="333.4" x2="142.4" y2="770.3" stroke="#3356a6" stroke-width="4"/><line x1="1701.3" y1="333.4" x2="1701.3" y2="770.3" stroke="#3356a6" stroke-width="4"/><line x1="1681.5" y1="333.4" x2="1681.5" y2="770.3" stroke="#3356a6" stroke-width="4"/><line x1="166.7" y1="794.6" x2="1657.5" y2="794.6" stroke="#3356a6" stroke-width="4"/><line x1="166.7" y1="815.5" x2="1657.5" y2="815.5" stroke="#3356a6" stroke-width="4"/><line x1="166.7" y1="288.3" x2="277.3" y2="288.3" stroke="#f6fbff" stroke-width="1.4"/><line x1="166.7" y1="309.1" x2="277.3" y2="309.1" stroke="#f6fbff" stroke-width="1.4"/><line x1="1546.6" y1="288.3" x2="1657.5" y2="288.3" stroke="#f6fbff" stroke-width="1.4"/><line x1="1546.6" y1="309.1" x2="1657.5" y2="309.1" stroke="#f6fbff" stroke-width="1.4"/><line x1="121.4" y1="333.4" x2="121.4" y2="770.3" stroke="#f6fbff" stroke-width="1.4"/><line x1="142.4" y1="333.4" x2="142.4" y2="770.3" stroke="#f6fbff" stroke-width="1.4"/><line x1="1701.3" y1="333.4" x2="1701.3" y2="770.3" stroke="#f6fbff" stroke-width="1.4"/><line x1="1681.5" y1="333.4" x2="1681.5" y2="770.3" stroke="#f6fbff" stroke-width="1.4"/><line x1="166.7" y1="794.6" x2="1657.5" y2="794.6" stroke="#f6fbff" stroke-width="1.4"/><line x1="166.7" y1="815.5" x2="1657.5" y2="815.5" stroke="#f6fbff" stroke-width="1.4"/><path d="M166.7 288.3 L144.0 294.3 L127.5 310.8 L121.4 333.4" stroke="#2a86e6" stroke-width="3.6" fill="none" stroke-linejoin="round"/><path d="M166.7 309.1 L154.5 312.4 L145.7 321.2 L142.4 333.4" stroke="#2a86e6" stroke-width="3.6" fill="none" stroke-linejoin="round"/><path d="M166.7 815.5 L144.1 809.4 L127.5 792.9 L121.4 770.3" stroke="#2a86e6" stroke-width="3.6" fill="none" stroke-linejoin="round"/><path d="M166.7 794.6 L154.6 791.3 L145.7 782.4 L142.4 770.3" stroke="#2a86e6" stroke-width="3.6" fill="none" stroke-linejoin="round"/><path d="M1657.5 288.3 L1679.4 294.3 L1695.4 310.8 L1701.3 333.4" stroke="#2a86e6" stroke-width="3.6" fill="none" stroke-linejoin="round"/><path d="M1657.5 309.1 L1669.5 312.4 L1678.3 321.2 L1681.5 333.4" stroke="#2a86e6" stroke-width="3.6" fill="none" stroke-linejoin="round"/><path d="M1657.5 815.5 L1679.4 809.4 L1695.4 792.9 L1701.3 770.3" stroke="#2a86e6" stroke-width="3.6" fill="none" stroke-linejoin="round"/><path d="M1657.5 794.6 L1669.5 791.3 L1678.3 782.4 L1681.5 770.3" stroke="#2a86e6" stroke-width="3.6" fill="none" stroke-linejoin="round"/><line x1="277.3" y1="288.3" x2="277.3" y2="309.1" stroke="#2a86e6" stroke-width="4"/><line x1="1546.6" y1="288.3" x2="1546.6" y2="309.1" stroke="#2a86e6" stroke-width="4"/></g><rect x="161.8" y="283.4" width="9.8" height="9.8" fill="#1a86f4" stroke="#3f86d4" stroke-width="0.8"/><rect x="137.5" y="765.4" width="9.8" height="9.8" fill="#1a86f4" stroke="#3f86d4" stroke-width="0.8"/><rect x="122.6" y="788.0" width="9.8" height="9.8" fill="#1a86f4" stroke="#3f86d4" stroke-width="0.8"/><rect x="140.8" y="777.5" width="9.8" height="9.8" fill="#1a86f4" stroke="#3f86d4" stroke-width="0.8"/><rect x="1690.5" y="305.9" width="9.8" height="9.8" fill="#1a86f4" stroke="#3f86d4" stroke-width="0.8"/><rect x="149.6" y="307.5" width="9.8" height="9.8" fill="#1a86f4" stroke="#3f86d4" stroke-width="0.8"/><rect x="1676.6" y="765.4" width="9.8" height="9.8" fill="#1a86f4" stroke="#3f86d4" stroke-width="0.8"/><rect x="1674.5" y="804.5" width="9.8" height="9.8" fill="#1a86f4" stroke="#3f86d4" stroke-width="0.8"/><rect x="1541.7" y="283.4" width="9.8" height="9.8" fill="#1a86f4" stroke="#3f86d4" stroke-width="0.8"/><rect x="137.5" y="328.5" width="9.8" height="9.8" fill="#1a86f4" stroke="#3f86d4" stroke-width="0.8"/><rect x="1696.4" y="765.4" width="9.8" height="9.8" fill="#1a86f4" stroke="#3f86d4" stroke-width="0.8"/><rect x="139.2" y="804.5" width="9.8" height="9.8" fill="#1a86f4" stroke="#3f86d4" stroke-width="0.8"/><rect x="1652.6" y="304.2" width="9.8" height="9.8" fill="#1a86f4" stroke="#3f86d4" stroke-width="0.8"/><rect x="1652.6" y="789.7" width="9.8" height="9.8" fill="#1a86f4" stroke="#3f86d4" stroke-width="0.8"/><rect x="1673.4" y="316.3" width="9.8" height="9.8" fill="#1a86f4" stroke="#3f86d4" stroke-width="0.8"/><rect x="139.1" y="289.4" width="9.8" height="9.8" fill="#1a86f4" stroke="#3f86d4" stroke-width="0.8"/><rect x="1676.6" y="328.5" width="9.8" height="9.8" fill="#1a86f4" stroke="#3f86d4" stroke-width="0.8"/><rect x="1652.6" y="810.6" width="9.8" height="9.8" fill="#1a86f4" stroke="#3f86d4" stroke-width="0.8"/><rect x="272.4" y="304.2" width="9.8" height="9.8" fill="#1a86f4" stroke="#3f86d4" stroke-width="0.8"/><rect x="116.5" y="765.4" width="9.8" height="9.8" fill="#1a86f4" stroke="#3f86d4" stroke-width="0.8"/><rect x="149.7" y="786.4" width="9.8" height="9.8" fill="#1a86f4" stroke="#3f86d4" stroke-width="0.8"/><rect x="1690.5" y="788.0" width="9.8" height="9.8" fill="#1a86f4" stroke="#3f86d4" stroke-width="0.8"/><rect x="161.8" y="304.2" width="9.8" height="9.8" fill="#1a86f4" stroke="#3f86d4" stroke-width="0.8"/><rect x="161.8" y="789.7" width="9.8" height="9.8" fill="#1a86f4" stroke="#3f86d4" stroke-width="0.8"/><rect x="1674.5" y="289.4" width="9.8" height="9.8" fill="#1a86f4" stroke="#3f86d4" stroke-width="0.8"/><rect x="122.6" y="305.9" width="9.8" height="9.8" fill="#1a86f4" stroke="#3f86d4" stroke-width="0.8"/><rect x="1696.4" y="328.5" width="9.8" height="9.8" fill="#1a86f4" stroke="#3f86d4" stroke-width="0.8"/><rect x="161.8" y="810.6" width="9.8" height="9.8" fill="#1a86f4" stroke="#3f86d4" stroke-width="0.8"/><rect x="140.8" y="316.3" width="9.8" height="9.8" fill="#1a86f4" stroke="#3f86d4" stroke-width="0.8"/><rect x="1652.6" y="283.4" width="9.8" height="9.8" fill="#1a86f4" stroke="#3f86d4" stroke-width="0.8"/><rect x="1664.6" y="786.4" width="9.8" height="9.8" fill="#1a86f4" stroke="#3f86d4" stroke-width="0.8"/><rect x="116.5" y="328.5" width="9.8" height="9.8" fill="#1a86f4" stroke="#3f86d4" stroke-width="0.8"/><rect x="272.4" y="283.4" width="9.8" height="9.8" fill="#1a86f4" stroke="#3f86d4" stroke-width="0.8"/><rect x="1673.4" y="777.5" width="9.8" height="9.8" fill="#1a86f4" stroke="#3f86d4" stroke-width="0.8"/><rect x="1664.6" y="307.5" width="9.8" height="9.8" fill="#1a86f4" stroke="#3f86d4" stroke-width="0.8"/><rect x="1541.7" y="304.2" width="9.8" height="9.8" fill="#1a86f4" stroke="#3f86d4" stroke-width="0.8"/><rect x="214.3" y="286.0" width="15.4" height="4.6" fill="#1a86f4" stroke="#3f86d4" stroke-width="0.8"/><rect x="214.3" y="306.8" width="15.4" height="4.6" fill="#1a86f4" stroke="#3f86d4" stroke-width="0.8"/><rect x="1594.3" y="286.0" width="15.4" height="4.6" fill="#1a86f4" stroke="#3f86d4" stroke-width="0.8"/><rect x="1594.3" y="306.8" width="15.4" height="4.6" fill="#1a86f4" stroke="#3f86d4" stroke-width="0.8"/><rect x="904.3" y="792.3" width="15.4" height="4.6" fill="#1a86f4" stroke="#3f86d4" stroke-width="0.8"/><rect x="904.3" y="813.2" width="15.4" height="4.6" fill="#1a86f4" stroke="#3f86d4" stroke-width="0.8"/><rect x="119.1" y="544.1" width="4.6" height="15.4" fill="#1a86f4" stroke="#3f86d4" stroke-width="0.8"/><rect x="140.1" y="544.1" width="4.6" height="15.4" fill="#1a86f4" stroke="#3f86d4" stroke-width="0.8"/><rect x="1699.0" y="544.1" width="4.6" height="15.4" fill="#1a86f4" stroke="#3f86d4" stroke-width="0.8"/><rect x="1679.2" y="544.1" width="4.6" height="15.4" fill="#1a86f4" stroke="#3f86d4" stroke-width="0.8"/><g stroke="#ececec" stroke-width="1.4" fill="none"><path d="M911.5 620 V670.3 H961.8"/><rect x="907.3" y="665.3" width="9.5" height="9.5"/><path d="M913 603 L919.4 609.5 L925.8 603 M919.4 609.5 V616"/><path d="M966 656.2 L978.8 669 M978.8 656.2 L966 669"/></g></svg>
<span class="t" style="left:3px;top:157px;color:#dcdcdc;letter-spacing:-0.1px">[&thinsp;−&thinsp;][Сверху&thinsp;][2D-каркас&thinsp;]</span>
<div class="a" style="left:1851px;top:166px;width:9px;height:3px;background:#f0f0f0"></div>
<svg style="left:1870px;top:159px" width="12" height="12" viewBox="0 0 12 12"><rect x="1.5" y="3.5" width="6.5" height="6.5" fill="none" stroke="#f0f0f0" stroke-width="1.6"/><path d="M4 3.5 V1.2 H10.5 V7.5 H8" fill="none" stroke="#f0f0f0" stroke-width="1.3"/></svg>
<svg style="left:1889px;top:159px" width="12" height="12" viewBox="0 0 12 12"><path d="M1.5 1.5 L9.5 9.5 M9.5 1.5 L1.5 9.5" stroke="#f0f0f0" stroke-width="2"/></svg>
<svg style="left:1760px;top:188px" width="140" height="140" viewBox="0 0 140 140"><circle cx="68.9" cy="68.5" r="52.5" fill="none" stroke="#4b525b" stroke-width="14.2"/></svg>
<div class="a" style="left:1803px;top:230px;width:52px;height:52px;background:#adadad"></div>
<div class="a" style="left:1813px;top:240px;width:32px;height:32px;background:#a1a5ab"></div>
<span class="t" style="left:1815px;top:246px;color:#474c55;font-size:17px;line-height:18px;font-weight:bold;transform:scaleX(0.64);transform-origin:0 0">Верх</span>
<span class="t" style="left:1822px;top:190px;color:#b4b6b8;font-size:20px;line-height:20px;transform:scaleX(0.9);transform-origin:0 0">С</span>
<span class="t" style="left:1766px;top:246px;color:#b4b6b8;font-size:20px;line-height:20px;transform:scaleX(0.9);transform-origin:0 0">З</span>
<span class="t" style="left:1878px;top:246px;color:#b4b6b8;font-size:20px;line-height:20px;transform:scaleX(0.9);transform-origin:0 0">В</span>
<span class="t" style="left:1819px;top:303px;color:#b4b6b8;font-size:20px;line-height:20px;transform:scaleX(0.9);transform-origin:0 0">Ю</span>
<div class="a" style="left:1805px;top:344px;width:47px;height:17px;background:linear-gradient(#9a9ea6,#80848c);border-radius:4px;border:1px solid #6c7078"></div>
<span class="t" style="left:1809px;top:345px;color:#50545c;font-size:11px">МСК</span>
<svg style="left:1835px;top:349px" width="9" height="7" viewBox="0 0 9 7"><path d="M1 1 H8 L4.5 6Z" fill="none" stroke="#a4a8b0" stroke-width="0.8"/></svg>
<div class="a" style="left:1876px;top:386px;width:32px;height:211px;background:#5d6065;border-radius:4px;border:1px solid #686b70"></div>
<svg style="left:1876px;top:386px" width="32" height="212" viewBox="0 0 32 212"><g stroke="#3f4247" fill="none" stroke-width="1.3" stroke-linejoin="round"><path d="M25 5 L29.5 1.5 M25 1.5 L29.5 5" stroke-width="1" stroke="#50535a"/><path d="M5.5 30 A10.5 10.5 0 0 1 16 19.5 H26.5 V30 A10.5 10.5 0 0 1 16 40.5 A10.5 10.5 0 0 1 5.5 30Z"/><circle cx="16" cy="30" r="5.5"/><path d="M8.6 37.4 L12.1 33.9 M23.4 37.4 L19.9 33.9" stroke-width="1"/><path d="M14 49.5 L18 49.5 L16 52Z" fill="#3f4247"/><path d="M4 57.5 H28" stroke="#53565c" stroke-width="1"/><path d="M9 83 Q6 79 3.5 76 Q2.5 74 4.5 73.5 Q6.5 73.5 9 76 V66 Q9 64 11 64 Q13 64 13 66 V73 V63.5 Q13 61.5 15 61.5 Q17 61.5 17 63.5 V73 V64.5 Q17 62.5 19 62.5 Q21 62.5 21 64.5 V74 L22.5 67.5 Q23.5 65.5 25 66.5 Q26.5 67.5 26 69.5 L23 80 Q21 84 17 84 H12 Q10 84 9 83Z"/><path d="M5 90 L17 102 M5 90 V95 M5 90 H10 M20 90 L5 105 M5 105 V100 M5 105 H10 M20 90 H15 M20 90 V95" stroke-width="1.4"/><circle cx="20" cy="105" r="4.3"/><path d="M23 108 L27.5 112.5" stroke-width="2.2"/><path d="M14 120 L18 120 L16 122.5Z" fill="#3f4247"/><path d="M15.5 126 L20 132 H17.5 V148.5 H13.5 V132 H11Z"/><path d="M13 136.5 Q5 137.5 5 140 Q5 143.5 15.5 143.5 Q27 143.5 27 140 Q27 137 19 136.5"/><path d="M9.5 141.5 L7 143.5 L10 145"/><path d="M14 157 L18 157 L16 159.5Z" fill="#3f4247"/><path d="M4 163.5 H28" stroke="#53565c" stroke-width="1"/><rect x="4.5" y="170" width="6.5" height="6"/><rect x="13" y="170" width="6.5" height="6"/><rect x="21.5" y="170" width="6" height="6"/><rect x="4.5" y="178" width="16" height="13.5"/><path d="M9 180.5 L16 184.8 L9 189Z" fill="#3f4247" stroke="none"/><path d="M22.5 202.5 H28.5 V208.5 H22.5Z M22.5 205.5 H28.5 M25.5 202.5 V208.5" stroke-width="0.9" stroke="#50535a"/></g></svg>
<div class="a" style="left:389px;top:971px;width:55px;height:26px;background:linear-gradient(#525252,#2c2c2c);border-top:1px solid #6a6a6a;border-left:1px solid #5a5a5a"></div>
<svg style="left:391px;top:975px" width="8" height="20" viewBox="0 0 8 20"><g fill="#8a8a8a"><rect x="1" y="1.0" width="1.6" height="1.6"/><rect x="4" y="1.0" width="1.6" height="1.6"/><rect x="1" y="4.2" width="1.6" height="1.6"/><rect x="4" y="4.2" width="1.6" height="1.6"/><rect x="1" y="7.4" width="1.6" height="1.6"/><rect x="4" y="7.4" width="1.6" height="1.6"/><rect x="1" y="10.6" width="1.6" height="1.6"/><rect x="4" y="10.6" width="1.6" height="1.6"/><rect x="1" y="13.8" width="1.6" height="1.6"/><rect x="4" y="13.8" width="1.6" height="1.6"/><rect x="1" y="17.0" width="1.6" height="1.6"/><rect x="4" y="17.0" width="1.6" height="1.6"/></g></svg>
<svg style="left:403px;top:978px" width="12" height="12" viewBox="0 0 12 12"><path d="M1.5 1.5 L10 10 M10 1.5 L1.5 10" stroke="#e0e0e0" stroke-width="1.8"/></svg>
<svg style="left:423px;top:976px" width="16" height="16" viewBox="0 0 16 16"><path d="M2 4.5 A3.5 3.5 0 0 0 6.5 8.5 L12.5 14.5 Q14 15.5 14.5 14 L8.5 7.5 A3.5 3.5 0 0 0 4.5 2 L6.5 4 L5 6 L2.5 4Z" fill="#d8d8d8" stroke="#d8d8d8" stroke-width="0.8" stroke-linejoin="round"/></svg>
<div class="a" style="left:444px;top:971px;width:1078px;height:26px;background:#c0c1c4;border-top:1px solid #b4b5b8;border-top-right-radius:2px"></div>
<div class="a" style="left:448px;top:977px;width:15px;height:14px;background:#b4bcc8;border:1px solid #6e7480;border-radius:1px"></div>
<svg style="left:449px;top:979px" width="14" height="11" viewBox="0 0 14 11"><path d="M2 1.5 L6 5 L2 8.5 M7 9 H11" stroke="#2a2e36" stroke-width="1.2" fill="none"/></svg>
<svg style="left:466px;top:982px" width="7" height="5" viewBox="0 0 7 5"><path d="M0.5 0.5 H6.5 L3.5 4Z" fill="#707070"/></svg>
<span class="t" style="left:478px;top:977px;color:#858585;font-style:italic;font-size:12px;letter-spacing:0.15px">Введите&nbsp; команду</span>
<svg style="left:1509px;top:981px" width="11" height="7" viewBox="0 0 11 7"><path d="M1 6 L5.5 1.2 L10 6Z" fill="#111"/></svg>
<div id="status" class="a"></div>
<svg style="left:0px;top:998px" width="230" height="20" viewBox="0 0 230 20"><defs><linearGradient id="mg" x1="0" y1="0" x2="0" y2="1"><stop offset="0" stop-color="#7e7e7e"/><stop offset="1" stop-color="#6a6a6a"/></linearGradient><linearGradient id="lg" x1="0" y1="0" x2="0" y2="1"><stop offset="0" stop-color="#5c5c5c"/><stop offset="1" stop-color="#4e4e4e"/></linearGradient></defs><path d="M9 1 H82 Q80 6 78 12 Q76 17 70 17 H20 Q15 17 13 10Z" fill="url(#mg)"/><path d="M81 1 H136 Q133 6 131 12 Q129 17 124 17 H90 Q85 17 84 10Z" fill="url(#lg)"/><path d="M136 1 H192 Q189 6 187 12 Q185 17 180 17 H146 Q141 17 140 10Z" fill="url(#lg)"/><path d="M196 1 H216 Q215 8 213 12 Q211 16 206 16 H194 Q195 6 196 1Z" fill="#4e4e4e"/></svg>
<span class="t" style="left:22px;top:1000px;color:#ffffff;font-weight:bold">Модель</span>
<span class="t" style="left:91px;top:1000px;color:#cfcfcf">Лист1</span>
<span class="t" style="left:146px;top:1000px;color:#cfcfcf">Лист2</span>
<svg style="left:200px;top:1001px" width="12" height="12" viewBox="0 0 12 12"><path d="M6 1.5 V10.5 M1.5 6 H10.5" stroke="#e0e0e0" stroke-width="2.2"/></svg>
<svg style="left:14px;top:1021px" width="26" height="6" viewBox="0 0 26 6"><ellipse cx="12" cy="12" rx="12" ry="11" fill="#6a98c0"/><ellipse cx="12" cy="12" rx="10" ry="9" fill="#a8c8e0"/></svg>
<div class="sg" style="left:1284px;top:999px;width:58px;height:27px"></div>
<div class="sg" style="left:1343px;top:999px;width:65px;height:27px"></div>
<div class="sg" style="left:1409px;top:999px;width:104px;height:27px"></div>
<div class="sg" style="left:1514px;top:999px;width:62px;height:27px"></div>
<div class="sg" style="left:1577px;top:999px;width:25px;height:27px"></div>
<div class="sg" style="left:1603px;top:999px;width:112px;height:27px"></div>
<div class="sg" style="left:1716px;top:999px;width:40px;height:27px"></div>
<div class="sg" style="left:1756px;top:999px;width:25px;height:27px"></div>
<div class="sg" style="left:1782px;top:999px;width:27px;height:27px"></div>
<div class="sg" style="left:1810px;top:999px;width:25px;height:27px"></div>
<div class="sg" style="left:1836px;top:999px;width:25px;height:27px"></div>
<div class="sg" style="left:1862px;top:999px;width:50px;height:27px"></div>
<span class="t" style="left:1288px;top:1005px;color:#f4f4f4;font-size:12.5px;letter-spacing:-0.2px">МОДЕЛЬ</span>
<svg style="left:1349px;top:1003px" width="16" height="18" viewBox="0 0 16 18"><g fill="#e0e0e0"><rect x="1" y="1" width="1.5" height="1.5"/><rect x="1" y="4" width="1.5" height="1.5"/><rect x="1" y="7" width="1.5" height="1.5"/><rect x="1" y="10" width="1.5" height="1.5"/><rect x="1" y="13" width="1.5" height="1.5"/><rect x="4" y="1" width="1.5" height="1.5"/><rect x="4" y="4" width="1.5" height="1.5"/><rect x="4" y="7" width="1.5" height="1.5"/><rect x="4" y="10" width="1.5" height="1.5"/><rect x="4" y="13" width="1.5" height="1.5"/><rect x="7" y="1" width="1.5" height="1.5"/><rect x="7" y="4" width="1.5" height="1.5"/><rect x="7" y="7" width="1.5" height="1.5"/><rect x="7" y="10" width="1.5" height="1.5"/><rect x="7" y="13" width="1.5" height="1.5"/><rect x="10" y="1" width="1.5" height="1.5"/><rect x="10" y="4" width="1.5" height="1.5"/><rect x="10" y="7" width="1.5" height="1.5"/><rect x="10" y="10" width="1.5" height="1.5"/><rect x="10" y="13" width="1.5" height="1.5"/><rect x="13" y="1" width="1.5" height="1.5"/><rect x="13" y="4" width="1.5" height="1.5"/><rect x="13" y="7" width="1.5" height="1.5"/><rect x="13" y="10" width="1.5" height="1.5"/><rect x="13" y="13" width="1.5" height="1.5"/><rect x="3" y="0" width="1" height="16"/><rect x="9" y="0" width="1" height="16"/></g></svg>
<svg style="left:1372px;top:1004px" width="16" height="16" viewBox="0 0 16 16"><g fill="#d8d8d8"><rect x="1" y="1" width="1.2" height="1.2"/><rect x="1" y="4" width="1.2" height="1.2"/><rect x="1" y="7" width="1.2" height="1.2"/><rect x="1" y="10" width="1.2" height="1.2"/><rect x="1" y="13" width="1.2" height="1.2"/><rect x="4" y="1" width="1.2" height="1.2"/><rect x="4" y="4" width="1.2" height="1.2"/><rect x="4" y="7" width="1.2" height="1.2"/><rect x="4" y="10" width="1.2" height="1.2"/><rect x="4" y="13" width="1.2" height="1.2"/><rect x="7" y="1" width="1.2" height="1.2"/><rect x="7" y="4" width="1.2" height="1.2"/><rect x="7" y="7" width="1.2" height="1.2"/><rect x="7" y="10" width="1.2" height="1.2"/><rect x="7" y="13" width="1.2" height="1.2"/><rect x="10" y="1" width="1.2" height="1.2"/><rect x="10" y="4" width="1.2" height="1.2"/><rect x="10" y="7" width="1.2" height="1.2"/><rect x="10" y="10" width="1.2" height="1.2"/><rect x="10" y="13" width="1.2" height="1.2"/><rect x="13" y="1" width="1.2" height="1.2"/><rect x="13" y="4" width="1.2" height="1.2"/><rect x="13" y="7" width="1.2" height="1.2"/><rect x="13" y="10" width="1.2" height="1.2"/><rect x="13" y="13" width="1.2" height="1.2"/></g></svg>
<div class="sarr" style="left:1396.6px;top:1009px"></div>
<svg style="left:1414px;top:1002px" width="20" height="20" viewBox="0 0 20 20"><path d="M4 2 V17 H16" stroke="#3a8ef0" stroke-width="1.6" fill="none"/><rect x="4" y="12" width="5" height="5" fill="none" stroke="#3a8ef0" stroke-width="1"/></svg>
<svg style="left:1437px;top:1003px" width="20" height="18" viewBox="0 0 20 18"><circle cx="8.5" cy="9.5" r="6.5" fill="none" stroke="#d8d8d8" stroke-width="1.3"/><path d="M8.5 9.5 H16 M8.5 9.5 L15 3" stroke="#d8d8d8" stroke-width="1.2"/></svg>
<div class="sarr" style="left:1462.8px;top:1009px"></div>
<svg style="left:1476px;top:1001px" width="20" height="24" viewBox="0 0 20 24"><path d="M10 1 V22 M2 4 L17 20" stroke="#c8c8c8" stroke-width="1.2"/></svg>
<div class="sarr" style="left:1501px;top:1009px"></div>
<svg style="left:1515px;top:1002px" width="20" height="20" viewBox="0 0 20 20"><path d="M2 17 H17 M2 17 L15 5" stroke="#3a8ef0" stroke-width="1.6" fill="none"/><rect x="7" y="11" width="3" height="3" fill="#3a8ef0"/></svg>
<svg style="left:1540px;top:1002px" width="20" height="20" viewBox="0 0 20 20"><rect x="4" y="4" width="13" height="13" fill="none" stroke="#3a8ef0" stroke-width="1.6"/><rect x="1" y="1" width="5" height="5" fill="#111"/><rect x="2" y="2" width="3" height="3" fill="#30e030"/></svg>
<div class="sarr" style="left:1565px;top:1009px"></div>
<svg style="left:1580px;top:1004px" width="20" height="18" viewBox="0 0 20 18"><path d="M1 2 H18 M1 6 H18 M1 10 H12 M1 14 H12" stroke="#e8e8e8" stroke-width="2"/></svg>
<svg style="left:1606px;top:1001px" width="24" height="24" viewBox="0 0 24 24"><path d="M11 2 L7 14 L2 20 L10 16 L11 20 L12 16 L20 20 L15 14Z" fill="#2a8af0"/><circle cx="15" cy="6" r="3.4" fill="none" stroke="#2a8af0" stroke-width="1.4"/></svg>
<svg style="left:1630px;top:1001px" width="24" height="24" viewBox="0 0 24 24"><path d="M11 4 L7 14 L2 20 L10 16 L11 20 L12 16 L20 20 L15 14Z" fill="#bcbcbc"/><path d="M15 2 L13 7 H16 L14 11" stroke="#bcbcbc" stroke-width="1.3" fill="none"/></svg>
<svg style="left:1654px;top:1001px" width="22" height="24" viewBox="0 0 22 24"><path d="M10 3 L7 14 L2 20 L10 16 L11 20 L12 16 L19 20 L14 14Z" fill="#bcbcbc"/></svg>
<span class="t" style="left:1680px;top:1005px;color:#f0f0f0;font-size:13px">1:1</span>
<div class="sarr" style="left:1702px;top:1009px"></div>
<svg style="left:1719px;top:1003px" width="18" height="18" viewBox="0 0 18 18"><g fill="#b4b4b4"><rect x="13.60" y="7.40" width="3.2" height="3.2" transform="rotate(0 15.20 9.00)"/><rect x="11.78" y="11.78" width="3.2" height="3.2" transform="rotate(45 13.38 13.38)"/><rect x="7.40" y="13.60" width="3.2" height="3.2" transform="rotate(90 9.00 15.20)"/><rect x="3.02" y="11.78" width="3.2" height="3.2" transform="rotate(135 4.62 13.38)"/><rect x="1.20" y="7.40" width="3.2" height="3.2" transform="rotate(180 2.80 9.00)"/><rect x="3.02" y="3.02" width="3.2" height="3.2" transform="rotate(225 4.62 4.62)"/><rect x="7.40" y="1.20" width="3.2" height="3.2" transform="rotate(270 9.00 2.80)"/><rect x="11.78" y="3.02" width="3.2" height="3.2" transform="rotate(315 13.38 4.62)"/><circle cx="9" cy="9" r="5.6"/></g><circle cx="9" cy="9" r="2.2" fill="#4b4b4b"/></svg>
<div class="sarr" style="left:1744.5px;top:1009px"></div>
<svg style="left:1760px;top:1004px" width="16" height="16" viewBox="0 0 16 16"><path d="M8 1 V15 M1 8 H15" stroke="#e0e0e0" stroke-width="1.8"/></svg>
<svg style="left:1786px;top:1002px" width="20" height="20" viewBox="0 0 20 20"><rect x="1" y="1" width="7" height="7" fill="none" stroke="#d0d0d0" stroke-width="1.1"/><circle cx="14" cy="10" r="3.5" fill="none" stroke="#d0d0d0" stroke-width="1.1"/><path d="M5 18 L8 12 L11 18Z" fill="none" stroke="#d0d0d0" stroke-width="1.1"/></svg>
<svg style="left:1812px;top:1003px" width="22" height="22" viewBox="0 0 22 22"><circle cx="11" cy="10.5" r="8.3" fill="#1a58b0" stroke="#2f7ee0" stroke-width="1.4"/><path d="M8 13 L10 14 L14 9" stroke="#3c86e0" stroke-width="1.1" fill="none"/></svg>
<svg style="left:1838px;top:1002px" width="22" height="22" viewBox="0 0 22 22"><rect x="2" y="5" width="16" height="13" fill="#e0c030"/><rect x="2" y="5" width="16" height="5" fill="#4a88d0"/><circle cx="5" cy="4" r="2" fill="#e8e8e8"/><path d="M9 17 L12 20 L19 13" stroke="#30c040" stroke-width="2" fill="none"/></svg>
<svg style="left:1866px;top:1005px" width="18" height="16" viewBox="0 0 18 16"><rect x="1" y="1" width="15" height="12" fill="none" stroke="#e0e0e0" stroke-width="1.1"/><path d="M4 10 L7.5 6.5 M4 10 V7.5 M4 10 H6.5 M13 4 L9.5 7.5 M13 4 V6.5 M13 4 H10.5" stroke="#e0e0e0" stroke-width="1.1" fill="none"/></svg>
<svg style="left:1890px;top:1005px" width="18" height="16" viewBox="0 0 18 16"><path d="M1 2 H16 M1 7 H16 M1 12 H16" stroke="#e8e8e8" stroke-width="1.9"/></svg>
<div id="rborder" class="a"></div>
</body></html>
